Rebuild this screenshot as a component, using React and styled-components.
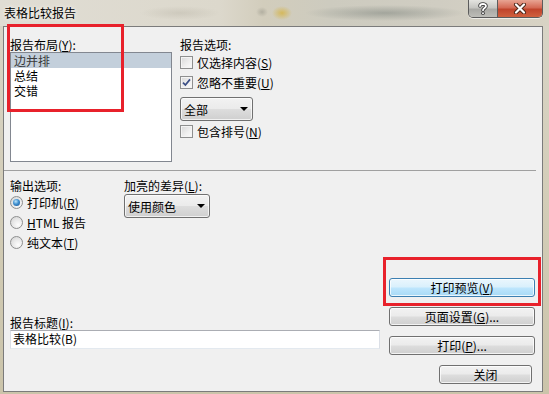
import styled, { createGlobalStyle } from "styled-components";

const GlobalStyle = createGlobalStyle`
  html, body { margin: 0; padding: 0; }
  body {
    width: 549px;
    height: 394px;
    overflow: hidden;
    font-family: "Noto Sans CJK SC", "Microsoft YaHei", sans-serif;
    font-size: 12px;
    color: #000;
  }
  * { box-sizing: border-box; }
`;

const Frame = styled.div`
  width: 549px;
  height: 394px;
  display: flex;
  flex-direction: column;
  background: linear-gradient(180deg, #d9d5c8 0%, #d3cdb8 50%, #cbc4aa 100%);
`;

const TitleBar = styled.div`
  height: 26px;
  flex: none;
  display: flex;
  align-items: flex-start;
  padding-left: 4px;
  background:
    radial-gradient(ellipse 10px 7px at 282px 13px, rgba(214, 178, 60, 0.75), transparent),
    radial-gradient(ellipse 6px 5px at 262px 12px, rgba(120, 120, 110, 0.35), transparent),
    radial-gradient(ellipse 80px 8px at 385px 13px, rgba(110, 118, 112, 0.45), transparent),
    radial-gradient(ellipse 40px 7px at 180px 13px, rgba(160, 155, 140, 0.25), transparent),
    linear-gradient(90deg, #e0ddd4 0%, #dcd8cc 40%, #d2cdbc 48%, #cdcbbf 60%, #d0cdc2 80%, #d8d3c4 100%);
`;

const Title = styled.div`
  margin-top: 5px;
  font-size: 12px;
  line-height: 15px;
  text-shadow: 0 0 5px #f4f2ec, 0 0 3px #f4f2ec;
`;

const CaptionButtons = styled.div`
  margin-left: auto;
  margin-right: 6px;
  display: flex;
  height: 18px;
  border: 1px solid #5c5c5c;
  border-top: none;
  border-radius: 0 0 5px 5px;
  overflow: hidden;
  box-shadow: 0 1px 0 rgba(255, 255, 255, 0.6);
`;

const CaptionButton = styled.div`
  width: ${(p) => p.$w}px;
  height: 100%;
  display: flex;
  align-items: center;
  justify-content: center;
  border-left: ${(p) => (p.$close ? "1px solid #5c5c5c" : "none")};
  background: ${(p) =>
    p.$close
      ? "linear-gradient(180deg, #e8a493 0%, #d46a55 45%, #c0442c 55%, #d0613f 100%)"
      : "linear-gradient(180deg, #e4e4e0 0%, #c6c6c2 45%, #a9a9a5 55%, #bdbdb8 100%)"};
`;

const Client = styled.div`
  flex: 1;
  margin: 0 6px 2px 3px;
  border: 1px solid #7b7b7b;
  background: #f0f0f0;
  position: relative;
  display: flex;
  flex-direction: column;
  padding: 10px 7px 7px 6px;
`;

const Annotation = styled.div`
  position: absolute;
  left: ${(p) => p.$x}px;
  top: ${(p) => p.$y}px;
  width: ${(p) => p.$w}px;
  height: ${(p) => p.$h}px;
  border: 3px solid #e8212b;
  pointer-events: none;
`;

const Label = styled.div`
  line-height: 15px;
  height: 15px;
  white-space: nowrap;
`;

const TopRow = styled.div`
  display: flex;
  gap: 8px;
`;

const Column = styled.div`
  display: flex;
  flex-direction: column;
  width: ${(p) => (p.$w ? `${p.$w}px` : "auto")};
  flex: ${(p) => (p.$grow ? 1 : "none")};
`;

const ListBox = styled.div`
  width: 162px;
  height: 110px;
  border: 1px solid #828790;
  background: #fff;
  display: flex;
  flex-direction: column;
`;

const ListItem = styled.div`
  height: 15px;
  line-height: 15px;
  padding-left: 3px;
  background: ${(p) => (p.$selected ? "#c3cfdb" : "transparent")};
  color: ${(p) => (p.$selected ? "#3a3a3a" : "#000")};
`;

const OptionRow = styled.div`
  display: flex;
  align-items: center;
  gap: 4px;
  height: ${(p) => p.$h || 16}px;
  margin-top: ${(p) => p.$mt || 0}px;
  line-height: 15px;
  white-space: nowrap;
`;

const CheckBox = styled.span`
  width: 13px;
  height: 13px;
  flex: none;
  border: 1px solid #8e8f8f;
  background: linear-gradient(135deg, #d8d8d8 0%, #f0f0f0 60%, #fbfbfb 100%);
  box-shadow: inset 0 0 0 1px #f4f4f4;
  display: flex;
  align-items: center;
  justify-content: center;
`;

const Radio = styled.span`
  width: 13px;
  height: 13px;
  flex: none;
  border-radius: 50%;
  border: 1px solid #8e8f8f;
  background: radial-gradient(circle at 65% 70%, #fdfdfd 0%, #e6e6e6 55%, #cfcfcf 100%);
  display: flex;
  align-items: center;
  justify-content: center;

  &::after {
    content: "";
    display: ${(p) => (p.$checked ? "block" : "none")};
    width: 7px;
    height: 7px;
    border-radius: 50%;
    background: radial-gradient(circle at 40% 35%, #bfe6fb 0%, #3f90d0 45%, #1a4f8c 100%);
  }
`;

const Combo = styled.div`
  width: ${(p) => p.$w}px;
  height: 24px;
  margin-top: ${(p) => p.$mt || 0}px;
  border: 1px solid #707070;
  border-radius: 3px;
  background: linear-gradient(180deg, #f2f2f2 0%, #ebebeb 48%, #dddddd 52%, #cfcfcf 100%);
  box-shadow: inset 0 0 0 1px rgba(255, 255, 255, 0.7);
  display: flex;
  align-items: center;
  padding: 0 4px 0 3px;
  line-height: 15px;

  &::after {
    content: "";
    margin-left: auto;
    border-left: 4px solid transparent;
    border-right: 4px solid transparent;
    border-top: 4px solid #000;
  }
`;

const Separator = styled.div`
  height: 1px;
  background: #a0a0a0;
  margin: 8px -1px 0 -6px;
  flex: none;
`;

const OutputRow = styled.div`
  display: flex;
  margin-top: 7px;
`;

const BottomRow = styled.div`
  margin-top: auto;
  display: flex;
  align-items: flex-end;
  gap: 9px;
`;

const TitleField = styled.div`
  flex: 1;
  display: flex;
  flex-direction: column;
  margin-bottom: 35px;
`;

const TextBox = styled.div`
  height: 19px;
  background: #fff;
  border: 1px solid #dbdfe6;
  border-top-color: #abadb3;
  border-bottom-color: #e3e9ef;
  padding-left: 2px;
  line-height: 16px;
`;

const ButtonColumn = styled.div`
  width: 146px;
  display: flex;
  flex-direction: column;
  gap: 10px;
`;

const Button = styled.div`
  height: 19px;
  width: ${(p) => (p.$w ? `${p.$w}px` : "100%")};
  align-self: flex-end;
  margin-right: ${(p) => p.$mr || 0}px;
  border: 1px solid ${(p) => (p.$default ? "#3c7fb1" : "#707070")};
  border-radius: 3px;
  background: ${(p) =>
    p.$default
      ? "linear-gradient(180deg, #eaf6fd 0%, #d9f0fc 48%, #bee6fd 52%, #a7d9f5 100%)"
      : "linear-gradient(180deg, #f2f2f2 0%, #ebebeb 48%, #dddddd 52%, #cfcfcf 100%)"};
  box-shadow: inset 0 0 0 1px rgba(255, 255, 255, 0.75);
  display: flex;
  align-items: center;
  justify-content: center;
  line-height: 15px;
`;

const Check = () => (
  <svg width="9" height="9" viewBox="0 0 9 9">
    <path d="M1 4.6 L3.4 7 L8 1.4" fill="none" stroke="#3b4f86" strokeWidth="1.7" />
  </svg>
);

const CloseGlyph = () => (
  <svg width="14" height="11" viewBox="0 0 14 11">
    <path d="M3 1.5 L11 9.5 M11 1.5 L3 9.5" stroke="#4a2418" strokeWidth="4" strokeLinecap="round" />
    <path d="M3 1.5 L11 9.5 M11 1.5 L3 9.5" stroke="#fff" strokeWidth="2.2" strokeLinecap="round" />
  </svg>
);

const HelpGlyph = () => (
  <svg width="10" height="13" viewBox="0 0 10 13">
    <path
      d="M2 4 C2 1.5 8 1.2 8 4 C8 6 5 6 5 8.3"
      fill="none"
      stroke="#3a3a3a"
      strokeWidth="3.6"
      strokeLinecap="round"
    />
    <circle cx="5" cy="11.2" r="1.8" fill="#3a3a3a" />
    <path d="M2 4 C2 1.5 8 1.2 8 4 C8 6 5 6 5 8.3" fill="none" stroke="#fff" strokeWidth="1.8" strokeLinecap="round" />
    <circle cx="5" cy="11.2" r="0.95" fill="#fff" />
  </svg>
);

export default function App() {
  return (
    <>
      <GlobalStyle />
      <Frame>
        <TitleBar>
          <Title>表格比较报告</Title>
          <CaptionButtons>
            <CaptionButton $w={28}>
              <HelpGlyph />
            </CaptionButton>
            <CaptionButton $w={45} $close>
              <CloseGlyph />
            </CaptionButton>
          </CaptionButtons>
        </TitleBar>

        <Client>
          <TopRow>
            <Column $w={162}>
              <Label>
                报告布局(<u>Y</u>):
              </Label>
              <ListBox>
                <ListItem $selected>边并排</ListItem>
                <ListItem>总结</ListItem>
                <ListItem>交错</ListItem>
              </ListBox>
            </Column>
            <Column>
              <Label>报告选项:</Label>
              <OptionRow $mt={2}>
                <CheckBox />
                <span>
                  仅选择内容(<u>S</u>)
                </span>
              </OptionRow>
              <OptionRow $mt={4}>
                <CheckBox>
                  <Check />
                </CheckBox>
                <span>
                  忽略不重要(<u>U</u>)
                </span>
              </OptionRow>
              <Combo $w={73} $mt={7}>全部</Combo>
              <OptionRow $mt={2}>
                <CheckBox />
                <span>
                  包含排号(<u>N</u>)
                </span>
              </OptionRow>
            </Column>
          </TopRow>

          <Separator />

          <OutputRow>
            <Column $w={114}>
              <Label>输出选项:</Label>
              <OptionRow $h={20} $mt={-1}>
                <Radio $checked />
                <span>
                  打印机(<u>R</u>)
                </span>
              </OptionRow>
              <OptionRow $h={20}>
                <Radio />
                <span>
                  <u>H</u>TML 报告
                </span>
              </OptionRow>
              <OptionRow $h={20}>
                <Radio />
                <span>
                  纯文本(<u>T</u>)
                </span>
              </OptionRow>
            </Column>
            <Column>
              <Label>
                加亮的差异(<u>L</u>):
              </Label>
              <Combo $w={86} $mt={1}>使用颜色</Combo>
            </Column>
          </OutputRow>

          <BottomRow>
            <TitleField>
              <Label>
                报告标题(<u>I</u>):
              </Label>
              <TextBox>表格比较(B)</TextBox>
            </TitleField>
            <ButtonColumn>
              <Button $default>
                打印预览(<u>V</u>)
              </Button>
              <Button>
                页面设置(<u>G</u>)...
              </Button>
              <Button>
                打印(<u>P</u>)...
              </Button>
              <Button $w={93} $mr={3}>
                关闭
              </Button>
            </ButtonColumn>
          </BottomRow>

          <Annotation $x={3} $y={-3} $w={117} $h={88} />
          <Annotation $x={379} $y={230} $w={158} $h={49} />
        </Client>
      </Frame>
    </>
  );
}
